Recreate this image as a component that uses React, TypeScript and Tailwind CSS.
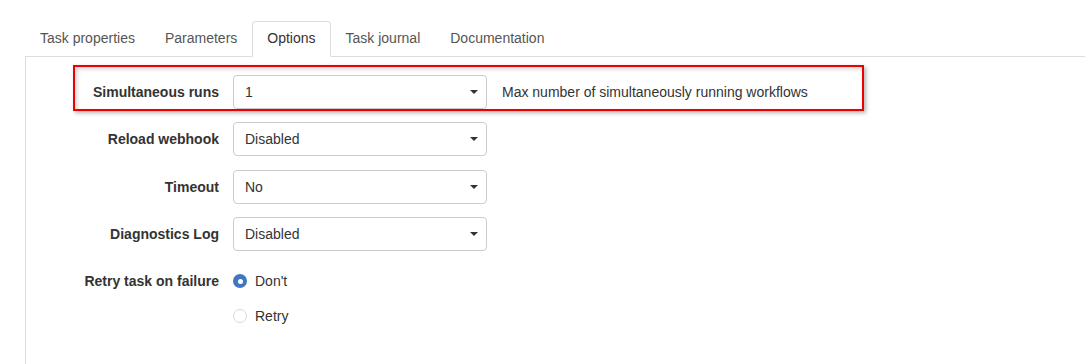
import React from 'react'

const tabs = ['Task properties', 'Parameters', 'Options', 'Task journal', 'Documentation']

const Caret = () => (
  <span className="ml-auto block h-0 w-0 border-x-[4px] border-t-[4px] border-x-transparent border-t-[#333]" />
)

const Select = ({ value }: { value: string }) => (
  <div className="flex h-[34px] w-[254px] items-center rounded-[4px] border border-[#ccc] bg-white pl-[11px] pr-[8px] text-[14px] text-[#333]">
    <span>{value}</span>
    <Caret />
  </div>
)

const Label = ({ children }: { children: React.ReactNode }) => (
  <div className="w-[144px] shrink-0 text-right text-[14px] font-bold leading-[20px] text-[#333]">
    {children}
  </div>
)

const Radio = ({ checked, label }: { checked?: boolean; label: string }) => (
  <div className="flex h-[20px] items-center">
    {checked ? (
      <span className="flex h-[14px] w-[14px] items-center justify-center rounded-full bg-[#4078bf]">
        <span className="h-[5px] w-[5px] rounded-full bg-white" />
      </span>
    ) : (
      <span className="h-[14px] w-[14px] rounded-full border border-[#d9d9d9] bg-white" />
    )}
    <span className="ml-[8px] text-[14px] text-[#333]">{label}</span>
  </div>
)

export default function App() {
  return (
    <div className="h-[364px] w-[1085px] overflow-hidden bg-white pl-[25px] pt-[21px] font-['Liberation_Sans',Arial,sans-serif]">
      <ul className="flex border-b border-[#ddd]">
        {tabs.map((t) => (
          <li key={t} className="-mb-px">
            <span
              className={
                t === 'Options'
                  ? 'block rounded-t-[4px] border border-[#ddd] border-b-white bg-white px-[14px] pb-[8px] pt-[6px] text-[14px] leading-[20px] text-[#333]'
                  : 'block border border-transparent px-[14px] pb-[8px] pt-[6px] text-[14px] leading-[20px] text-[#555]'
              }
            >
              {t}
            </span>
          </li>
        ))}
      </ul>
      <div className="h-full border-l border-[#ddd] pl-[49px] pt-[8px]">
        <div className="-ml-[2px] flex w-[791px] items-start border-2 border-[#e00] pt-[8px] shadow-[2px_2px_4px_rgba(0,0,0,0.3),inset_2px_2px_4px_rgba(0,0,0,0.18)]">
          <div className="flex h-[34px] items-center">
            <Label>Simultaneous runs</Label>
            <div className="ml-[14px]">
              <Select value="1" />
            </div>
            <span className="ml-[15px] text-[14px] text-[#333]">
              Max number of simultaneously running workflows
            </span>
          </div>
        </div>
        <div className="mt-[11px] flex h-[34px] items-center">
          <Label>Reload webhook</Label>
          <div className="ml-[14px]">
            <Select value="Disabled" />
          </div>
        </div>
        <div className="mt-[14px] flex h-[34px] items-center">
          <Label>Timeout</Label>
          <div className="ml-[14px]">
            <Select value="No" />
          </div>
        </div>
        <div className="mt-[13px] flex h-[34px] items-center">
          <Label>Diagnostics Log</Label>
          <div className="ml-[14px]">
            <Select value="Disabled" />
          </div>
        </div>
        <div className="mt-[20px] flex items-start">
          <Label>Retry task on failure</Label>
          <div className="ml-[14px] flex flex-col gap-[15px]">
            <Radio checked label="Don't" />
            <Radio label="Retry" />
          </div>
        </div>
      </div>
    </div>
  )
}
